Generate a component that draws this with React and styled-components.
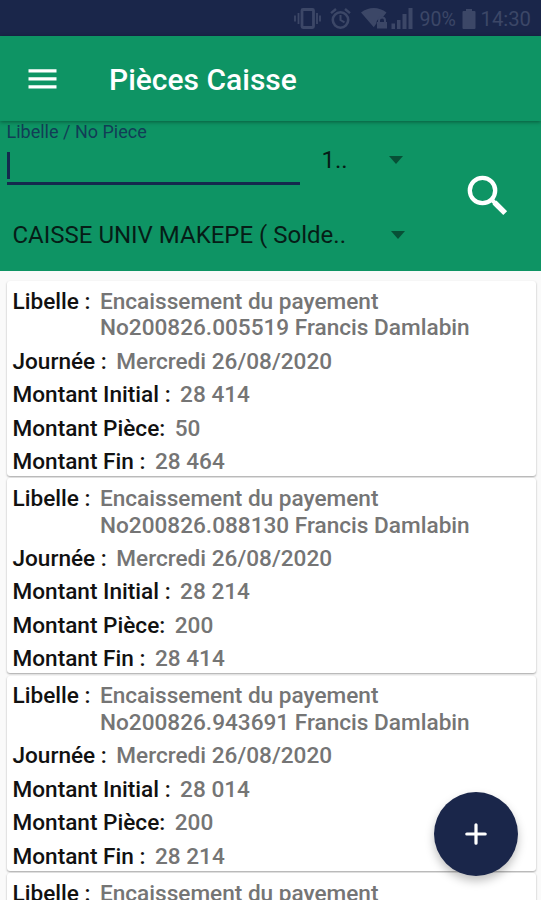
import React from 'react';
import styled, { createGlobalStyle } from 'styled-components';

const pieces = [
  { id: 1, numero: '200826.005519', initial: '28 414', montant: '50', fin: '28 464' },
  { id: 2, numero: '200826.088130', initial: '28 214', montant: '200', fin: '28 414' },
  { id: 3, numero: '200826.943691', initial: '28 014', montant: '200', fin: '28 214' },
  { id: 4 },
];

const StatusIcons = () => (
  <svg width="120" height="24" viewBox="294 7 120 24" fill="none" stroke="currentColor">
    <rect x="303" y="9.5" width="11.5" height="18" rx="1" strokeWidth="2.8" />
    <path d="M299.5 13v11M296 15.5v6M318 13v11M321 15.5v6" strokeWidth="1.8" />
    <circle cx="341.5" cy="20" r="7.700" strokeWidth="2.600" />
    <path d="M341.5 15v5l4 2.3" strokeWidth="2" />
    <path d="M332 13.2l5-4.2M346 9l5 4.2" strokeWidth="2.4" />
    <g fill="currentColor" stroke="none">
      <path d="M362 12.5c7.5-6 18-6 25.500 0l-4.500 5.800c-3.500-.5-5.500 2-5.500 5l-2.700 4z" />
      <path d="M379 22v-1.500a4 4 0 0 1 8 0v1.500h1v6.500h-10v-6.500zm2 0h4v-1.500a2 2 0 0 0-4 0z" />
      <path d="M392.500 23.500h3.500v5.500h-3.500zM398 20h3.500v9h-3.500zM403.500 14h4v15h-4zM409.500 8h4v21h-4z" />
    </g>
  </svg>
);

const BatteryIcon = () => (
  <svg width="14" height="21" viewBox="0 0 14 21" fill="currentColor">
    <path d="M4 0h6v2h2.500q1 0 1 1v16q0 1-1 1h-11q-1 0-1-1v-16q0-1 1-1h2.500z" />
  </svg>
);

const MenuIcon = () => (
  <svg width="29" height="20" viewBox="0 0 29 20" fill="#fff">
    <path d="M.5.200h28v3.300h-28zM.5 8.200h28v3.300h-28zM.5 16.200h28v3.300h-28z" />
  </svg>
);

const SearchIcon = () => (
  <svg width="42" height="42" viewBox="0 0 42 42" fill="none" stroke="#fff">
    <circle cx="15.500" cy="15.500" r="12.700" strokeWidth="4.300" />
    <path d="M24.500 24.500L29 29" strokeWidth="4" />
    <path d="M27.500 27.500l10.700 10.700" strokeWidth="5.400" />
  </svg>
);

const PlusIcon = () => (
  <svg width="22" height="22" viewBox="0 0 22 22" stroke="#fff" strokeWidth="3.200" strokeLinecap="round">
    <path d="M11 1.800v18.400M1.800 11h18.400" />
  </svg>
);

const Line = ({ label, children }) => (
  <Row>
    <Label>{label}</Label>
    <Value>{children}</Value>
  </Row>
);

const App = () => (
  <>
    <GlobalStyle />
    <Screen>
      <StatusBar>
        <StatusIcons />
        <Battery>90%</Battery>
        <BatteryIcon />
        <Clock>14:30</Clock>
      </StatusBar>

      <Toolbar>
        <MenuButton aria-label="Menu">
          <MenuIcon />
        </MenuButton>
        <Title>Pièces Caisse</Title>
      </Toolbar>

      <Filters>
        <Fields>
          <TopFields>
            <SearchField>
              <FieldLabel>Libelle / No Piece</FieldLabel>
              <FieldInput>
                <Caret />
              </FieldInput>
            </SearchField>
            <Limit>
              <span>1..</span>
              <Arrow />
            </Limit>
          </TopFields>
          <Account>
            <span>CAISSE UNIV MAKEPE ( Solde..</span>
            <Arrow />
          </Account>
        </Fields>
        <SearchButton aria-label="Rechercher">
          <SearchIcon />
        </SearchButton>
      </Filters>

      <List>
        {pieces.map((piece) => (
          <Card key={piece.id}>
            <Line label="Libelle :">
              Encaissement du payement
              {piece.numero && (
                <>
                  <br />
                  No{piece.numero} Francis Damlabin
                </>
              )}
            </Line>
            {piece.numero && (
              <>
                <Line label="Journée :">Mercredi 26/08/2020</Line>
                <Line label="Montant Initial :">{piece.initial}</Line>
                <Line label="Montant Pièce:">{piece.montant}</Line>
                <Line label="Montant Fin :">{piece.fin}</Line>
              </>
            )}
          </Card>
        ))}
      </List>

      <AddButton aria-label="Ajouter">
        <PlusIcon />
      </AddButton>
    </Screen>
  </>
);

const GlobalStyle = createGlobalStyle`
  * {
    box-sizing: border-box;
  }

  body {
    margin: 0;
    overflow: hidden;
    font-family: Roboto, sans-serif;
  }

  button {
    padding: 0;
    border: 0;
    background: none;
  }

  svg {
    display: block;
    flex: none;
  }
`;

const Screen = styled.div`
  position: relative;
  display: flex;
  flex-direction: column;
  width: 541px;
  height: 900px;
  overflow: hidden;
  background: #fafafa;
`;

const StatusBar = styled.div`
  display: flex;
  flex: none;
  align-items: center;
  justify-content: flex-end;
  height: 36px;
  padding: 2px 10px 0 0;
  background: #1a264a;
  color: #3c4767;
  font-size: 20.3px;
`;

const Battery = styled.span`
  width: 37px;
  margin: 0 6px 0 6px;
  font-size: 19.5px;
  white-space: nowrap;
`;

const Clock = styled.span`
  margin-left: 4px;
`;

const Toolbar = styled.header`
  z-index: 1;
  display: flex;
  flex: none;
  align-items: center;
  height: 85px;
  padding-left: 28px;
  background: #0e9464;
  box-shadow: 0 1px 4px rgba(0, 0, 0, 0.4);
`;

const MenuButton = styled.button`
  margin-right: 52px;
`;

const Title = styled.h1`
  margin: 2px 0 0;
  color: #fff;
  font-size: 30px;
  font-weight: 500;
`;

const Filters = styled.section`
  display: flex;
  flex: none;
  align-items: center;
  height: 150px;
  background: #0e9464;
  color: #061d17;
  font-size: 24px;
`;

const Fields = styled.div`
  display: flex;
  flex-direction: column;
  width: 467px;
  height: 100%;
`;

const TopFields = styled.div`
  display: flex;
  height: 77px;
`;

const SearchField = styled.div`
  width: 293px;
  margin-left: 6.500px;
`;

const FieldLabel = styled.div`
  height: 21px;
  color: #123d56;
  font-size: 18px;
  line-height: 21px;
`;

const FieldInput = styled.div`
  display: flex;
  height: 43px;
  padding-top: 10px;
  border-bottom: 3px solid #142a4d;
`;

const Caret = styled.span`
  width: 3px;
  height: 27px;
  background: #142a4d;
`;

const Limit = styled.div`
  display: flex;
  align-items: center;
  justify-content: space-between;
  width: 81px;
  height: 77px;
  margin-left: 22px;
`;

const Arrow = styled.i`
  border: 7px solid transparent;
  border-top: 8px solid #075036;
  border-bottom: 0;
`;

const Account = styled.div`
  display: flex;
  align-items: center;
  justify-content: space-between;
  width: 392px;
  height: 73px;
  margin-left: 12.5px;
`;

const SearchButton = styled.button`
  margin-top: 0;
`;

const List = styled.main`
  display: flex;
  flex-direction: column;
  gap: 2.3px;
  padding: 10px 5px 0 7px;
`;

const Card = styled.article`
  display: flex;
  flex: none;
  flex-direction: column;
  gap: 6.7px;
  height: 195px;
  padding: 7.7px 6px 0 5.5px;
  border-radius: 3px;
  background: #fff;
  box-shadow: 0 1px 2px rgba(0, 0, 0, 0.35);
`;

const Row = styled.div`
  display: flex;
  font-size: 22.6px;
  font-weight: 500;
  line-height: 26.7px;
  white-space: nowrap;
`;

const Label = styled.span`
  color: #111;
`;

const Value = styled.span`
  margin-left: 9.5px;
  color: #757575;
`;

const AddButton = styled.button`
  position: absolute;
  right: 23px;
  bottom: 24px;
  display: flex;
  align-items: center;
  justify-content: center;
  width: 84px;
  height: 84px;
  border-radius: 50%;
  background: #1a264a;
  box-shadow: 0 5px 10px rgba(0, 0, 0, 0.25);
`;

export default App;
